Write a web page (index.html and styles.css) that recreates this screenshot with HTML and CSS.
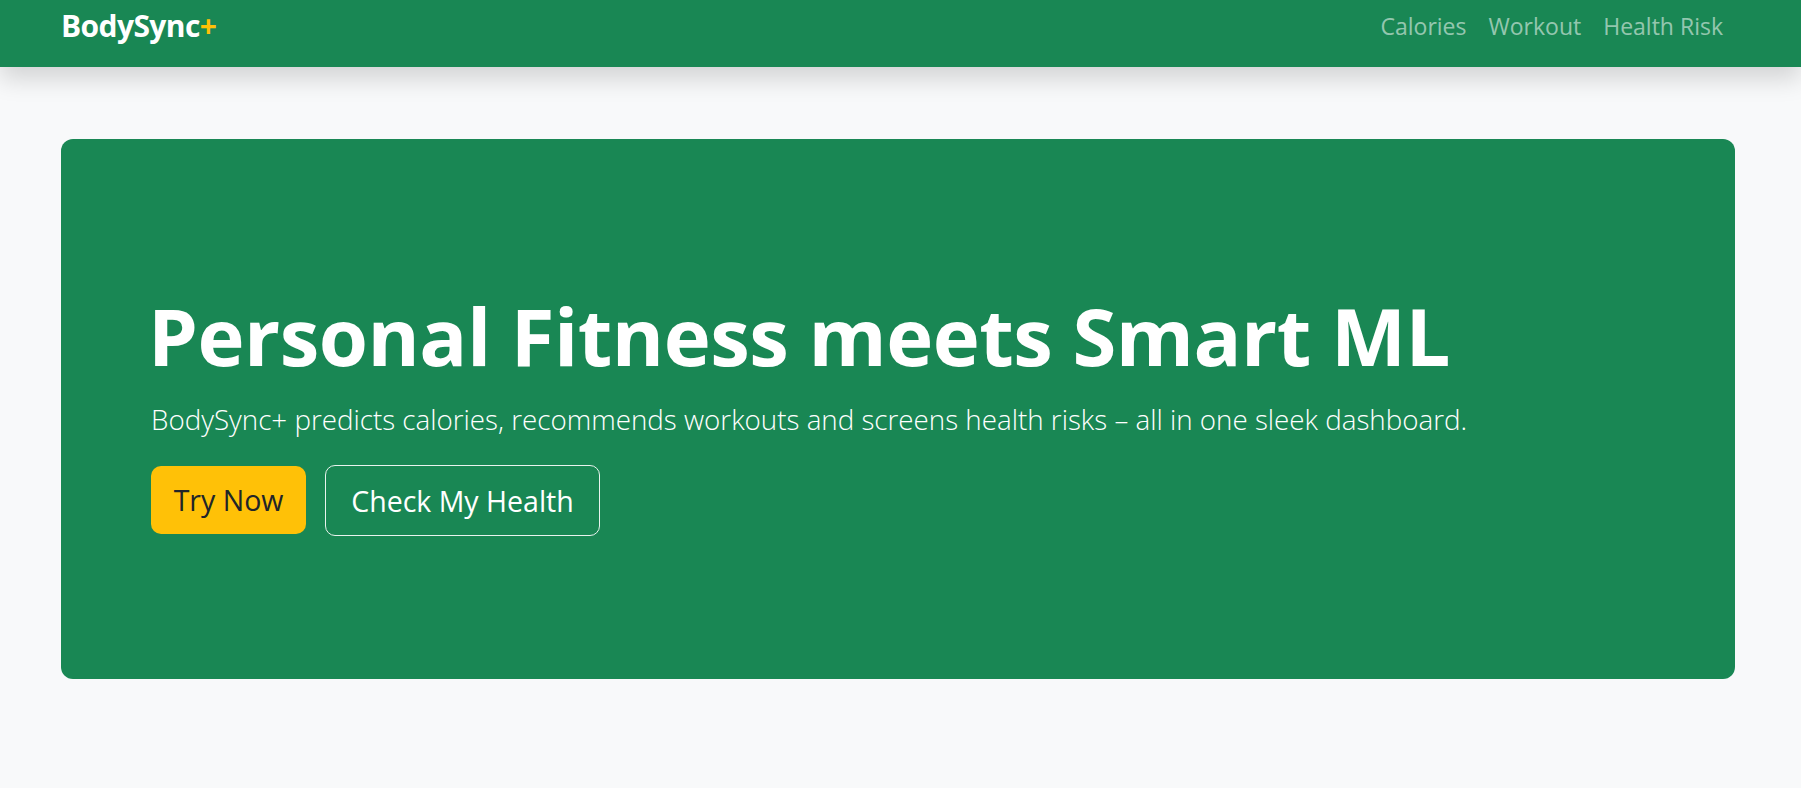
FILE: index.html
```html
<!DOCTYPE html>
<html lang="en">
<head>
<meta charset="utf-8">
<title>BodySync+</title>
<link rel="stylesheet" href="styles.css">
</head>
<body>
<nav class="navbar">
  <div class="nav-inner">
    <a class="brand" href="#">BodySync<span class="plus">+</span></a>
    <ul class="nav-links">
      <li><a href="#">Calories</a></li>
      <li><a href="#">Workout</a></li>
      <li><a href="#">Health Risk</a></li>
    </ul>
  </div>
</nav>
<main class="main">
  <section class="hero">
    <h1 class="hero-title">Personal Fitness meets Smart ML</h1>
    <p class="hero-lead">BodySync+ predicts calories, recommends workouts and screens health risks – all in one sleek dashboard.</p>
    <div class="hero-actions">
      <a class="btn btn-warning" href="#">Try Now</a>
      <a class="btn btn-outline" href="#">Check My Health</a>
    </div>
  </section>
</main>
</body>
</html>
```
FILE: styles.css
```css
* { box-sizing: border-box; }
html, body { margin: 0; padding: 0; }
body {
  background: #f8f9fa;
  font-family: "Open Sans", "Noto Sans", sans-serif;
  color: #212529;
  height: 788px;
  overflow: hidden;
}
a { text-decoration: none; }

.navbar {
  background: #198754;
  height: 67px;
  box-shadow: 0 12px 24px rgba(0, 0, 0, 0.15);
  position: relative;
  z-index: 1;
}
.nav-inner {
  height: 100%;
  display: flex;
  align-items: flex-start;
  justify-content: space-between;
  padding: 0 66px 0 61px;
}
.brand {
  color: #fff;
  font-weight: 700;
  font-size: 30px;
  line-height: 41px;
  letter-spacing: -0.6px;
  margin-top: 5px;
}
.plus { color: #ffc107; }
.nav-links {
  list-style: none;
  margin: 11px 0 0;
  padding: 0;
  display: flex;
}
.nav-links a {
  display: block;
  padding: 0 12px 0 10px;
  font-size: 23px;
  line-height: 31px;
  color: rgba(255, 255, 255, 0.55);
}
.nav-links li:last-child a { padding-right: 12px; }

.main {
  padding: 72px 66px 0 61px;
}
.hero {
  background: #198754;
  border-radius: 12px;
  height: 540px;
  padding: 148px 90px 0;
  display: flex;
  flex-direction: column;
  align-items: flex-start;
  color: #fff;
}
.hero-title {
  margin: 0 0 0 -3px;
  font-size: 79.6px;
  font-weight: 700;
  line-height: 96px;
  letter-spacing: -0.5px;
}
.hero-lead {
  margin: 16px 0 0;
  font-size: 27.75px;
  font-weight: 300;
  line-height: 41px;
}
.hero-actions {
  display: flex;
  align-items: flex-start;
  gap: 19px;
  margin-top: 26px;
}
.btn {
  display: inline-flex;
  align-items: center;
  justify-content: center;
  font-size: 28.5px;
  height: 68px;
  border-radius: 10px;
  border: 1px solid transparent;
}
.btn-warning {
  background: #ffc107;
  color: #212529;
  width: 155px;
}
.btn-outline {
  border-color: #e9f3ee;
  color: #fff;
  width: 275px;
  height: 71px;
  margin-top: -1px;
}
```
